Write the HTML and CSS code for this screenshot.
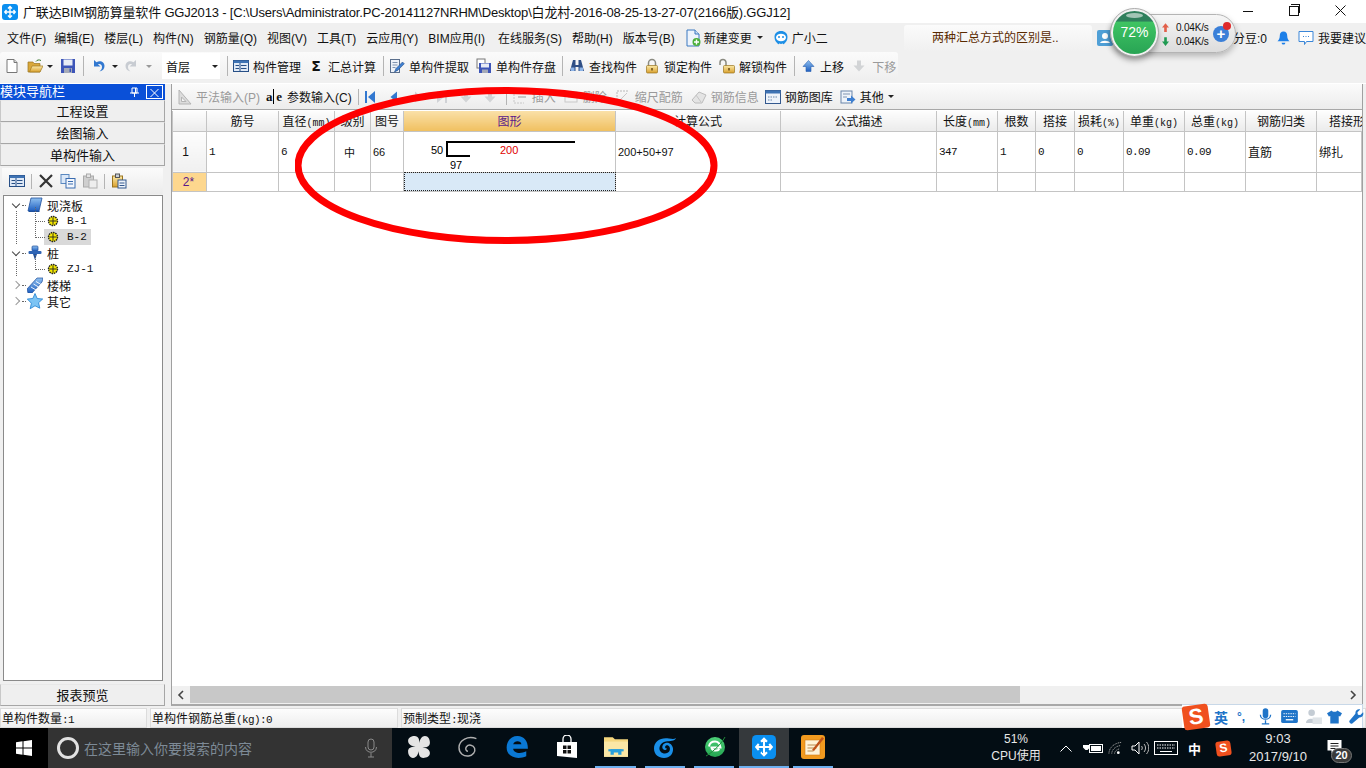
FILE: index.html
```html
<!DOCTYPE html>
<html lang="zh-CN">
<head>
  <meta charset="UTF-8" />
  <title>广联达BIM钢筋算量软件 GGJ2013</title>
  <link rel="stylesheet" href="styles.css">
</head>
<body>
  <!-- icon sprite -->
  <svg class="sprite" xmlns="http://www.w3.org/2000/svg">
    <defs>
      <linearGradient id="gBlue" x1="0" y1="0" x2="0" y2="1"><stop offset="0" stop-color="#8fc0f0"/><stop offset="1" stop-color="#1f5fc0"/></linearGradient>
      <linearGradient id="gGold" x1="0" y1="0" x2="0" y2="1"><stop offset="0" stop-color="#fbe9a8"/><stop offset="1" stop-color="#d9a02c"/></linearGradient>
      <linearGradient id="gGreen" x1="0" y1="0" x2="0" y2="1"><stop offset="0" stop-color="#4cd077"/><stop offset="1" stop-color="#25a552"/></linearGradient>
    </defs>
    <symbol id="i-gld" viewBox="0 0 16 16"><rect width="16" height="16" rx="3" fill="#0a8ff0"/><path d="M8 2.5v11M3 8h10M6 4.5l2-2 2 2M6 11.5l2 2 2-2M4.5 6L2.8 8l1.7 2M11.5 6l1.7 2-1.7 2" fill="none" stroke="#fff" stroke-width="1.4"/></symbol>
    <symbol id="i-doc" viewBox="0 0 16 16"><path d="M3 1.5h7l3 3v10H3z" fill="#fff" stroke="#777"/><path d="M10 1.5v3h3" fill="#ddd" stroke="#777"/></symbol>
    <symbol id="i-open" viewBox="0 0 16 16"><path d="M1 4h5l1 1.5h6V14H1z" fill="#d9a83a" stroke="#9a7420" stroke-width=".7"/><path d="M2.5 14L5 8h11l-3 6z" fill="url(#gGold)" stroke="#a07a20" stroke-width=".7"/><path d="M9 3.5C10 1.8 12 1.5 14 2.5" fill="none" stroke="#3a7a30"/></symbol>
    <symbol id="i-save" viewBox="0 0 16 16"><rect x="1" y="1" width="14" height="14" fill="#3d55b8"/><rect x="3.5" y="1.5" width="9" height="6" fill="#e8ecf5"/><rect x="4" y="10" width="8" height="5" fill="#a5aab8"/><rect x="9.5" y="10.5" width="1.5" height="3.5" fill="#3d55b8"/></symbol>
    <symbol id="i-undo" viewBox="0 0 14 16"><path d="M3 2v6.500h6.500L7 6.200C9 5.400 11 6.600 11 9c0 2-1 3.400-2.500 4.500C11.500 13 13.500 11 13.500 8 13.500 3.800 9 2 5.500 4.300z" fill="#3278d0"/></symbol>
    <symbol id="i-redo" viewBox="0 0 14 16"><path d="M11 2v6.500H4.500L7 6.200C5 5.400 3 6.600 3 9c0 2 1 3.400 2.500 4.500C2.500 13 .5 11 .5 8 .5 3.800 5 2 8.500 4.300z" fill="#c8ccd2"/></symbol>
    <symbol id="i-form" viewBox="0 0 16 16"><rect x=".5" y="2.5" width="15" height="11" fill="#dfe9f6" stroke="#274f86"/><rect x=".5" y="2.5" width="15" height="2.5" fill="#3e73b4"/><path d="M2.5 7.500h3.500M2.500 10.500h3.500M8 7.500h5.500M8 10.500h5.500M7 5v8" stroke="#274f86" fill="none"/></symbol>
    <symbol id="i-pick" viewBox="0 0 16 16"><rect x="1.5" y="1.5" width="9" height="13" fill="#eef2f8" stroke="#5b6f8c"/><path d="M3.500 4.500h5M3.500 7h5M3.500 9.500h3" stroke="#8094b0"/><path d="M5.500 14L7 10.500 13.500 4l1.800 1.800-6.500 6.500z" fill="#3e7fd0" stroke="#274f86" stroke-width=".6"/></symbol>
    <symbol id="i-disk" viewBox="0 0 16 16"><rect x="1" y="1" width="8" height="9" fill="#fff" stroke="#777"/><rect x="3" y="5" width="12" height="10" fill="#3d55b8"/><rect x="5" y="5.5" width="8" height="4" fill="#e8ecf5"/><rect x="6" y="11.5" width="6" height="3.5" fill="#a5aab8"/></symbol>
    <symbol id="i-binoc" viewBox="0 0 16 16"><path d="M4 2h2.500v5h3V2H12l3 11H9.500V9h-3v4H1z" fill="#2f4f86"/><rect x="2" y="9.5" width="3.5" height="3.5" fill="#8db4e8"/><rect x="10.5" y="9.5" width="3.5" height="3.5" fill="#8db4e8"/></symbol>
    <symbol id="i-lock" viewBox="0 0 16 16"><path d="M4.500 8V5a3.500 3.500 0 0 1 7 0v3" fill="none" stroke="#8a8a80" stroke-width="1.5"/><rect x="2.5" y="7.5" width="11" height="7.5" rx="1" fill="url(#gGold)" stroke="#9a7420" stroke-width=".7"/><path d="M8 10v2.500" stroke="#6a4a10" stroke-width="1.5"/></symbol>
    <symbol id="i-unlock" viewBox="0 0 16 16"><path d="M1 7V4.500a3 3 0 0 1 6 0V8" fill="none" stroke="#8a8a80" stroke-width="1.5"/><rect x="4.5" y="7.5" width="11" height="7.5" rx="1" fill="url(#gGold)" stroke="#9a7420" stroke-width=".7"/><path d="M10 10v2.500" stroke="#6a4a10" stroke-width="1.5"/></symbol>
    <symbol id="i-up" viewBox="0 0 13 16"><path d="M6.500 2.500L12 8.500H9v5H4v-5H1z" fill="url(#gBlue)" stroke="#2a62b0" stroke-width=".6"/></symbol>
    <symbol id="i-down" viewBox="0 0 16 16"><path d="M8 13.500L2.500 7.500H6v-5h4v5h3.500z" fill="#d2d4d6"/></symbol>
    <symbol id="i-ruler" viewBox="0 0 16 16"><path d="M3 1v14h12L3 1z" fill="#dcdcdc" stroke="#b4b4b4"/><path d="M5.500 8v4.500H10z" fill="#f4f4f4" stroke="#b4b4b4"/></symbol>
    <symbol id="i-first" viewBox="0 0 16 16"><rect x="3" y="2" width="2" height="12" fill="#3278d0"/><path d="M13 2v12L6 8z" fill="#3278d0"/></symbol>
    <symbol id="i-prev" viewBox="0 0 16 16"><path d="M11 2.500v11L4.500 8z" fill="#3278d0"/></symbol>
    <symbol id="i-next" viewBox="0 0 16 16"><path d="M5 2.500v11L11.500 8z" fill="#d0d2d6"/></symbol>
    <symbol id="i-last" viewBox="0 0 16 16"><rect x="11" y="2" width="2" height="12" fill="#d0d2d6"/><path d="M3 2v12l7-6z" fill="#d0d2d6"/></symbol>
    <symbol id="i-ins" viewBox="0 0 16 16"><path d="M2 2v12h10" fill="none" stroke="#c8c8c8" stroke-dasharray="2 1"/><rect x="6" y="7" width="8" height="2" fill="#c8c8c8"/></symbol>
    <symbol id="i-del" viewBox="0 0 16 16"><rect x="2" y="3" width="12" height="10" fill="#f2f2f2" stroke="#c8c8c8"/><path d="M5 8h6" stroke="#c8c8c8"/></symbol>
    <symbol id="i-scale" viewBox="0 0 16 16"><path d="M2 14V2h12" fill="none" stroke="#b8b8b8" stroke-dasharray="2 1"/><path d="M4 12l8-8" stroke="#c8c8c8"/></symbol>
    <symbol id="i-info" viewBox="0 0 16 16"><path d="M1 11l7-8 7 3-4 8H4z" fill="#e4e4e4" stroke="#bcbcbc"/><path d="M5 6l5 7" stroke="#c4c4c4"/></symbol>
    <symbol id="i-lib" viewBox="0 0 16 16"><rect x=".5" y="1.5" width="15" height="13" fill="#eef3fa" stroke="#33588e"/><rect x=".5" y="1.5" width="15" height="3" fill="#3e73b4"/><path d="M3 8h10M3 11h4" stroke="#6a86aa" stroke-dasharray="1.500 1"/></symbol>
    <symbol id="i-other" viewBox="0 0 16 16"><rect x="1" y="2" width="11" height="12" fill="#eef3fa" stroke="#6a86aa"/><path d="M3 5h7M3 8h4" stroke="#8094b0"/><path d="M7 9h4V6.500L15.500 10.500 11 14.500V12H7z" fill="#3e7fd0"/></symbol>
    <symbol id="i-x" viewBox="0 0 16 16"><path d="M2 2l12 12M14 2L2 14" stroke="#333" stroke-width="2.2"/></symbol>
    <symbol id="i-copy" viewBox="0 0 16 16"><rect x="1" y="1.5" width="8" height="9" fill="#dbe8f8" stroke="#5a88c0"/><rect x="6" y="5.5" width="9" height="9.5" fill="#f2f6fc" stroke="#3a6cb0"/><path d="M8 8.500h5M8 11h5" stroke="#3a6cb0"/></symbol>
    <symbol id="i-paste-off" viewBox="0 0 16 16"><rect x="1.5" y="3" width="10" height="11" fill="#cfcfcf" stroke="#aaa"/><rect x="4.5" y="1" width="4" height="3.5" fill="#e4e4e4" stroke="#aaa"/><rect x="7" y="7" width="8" height="8" fill="#eee" stroke="#b0b0b0"/></symbol>
    <symbol id="i-paste" viewBox="0 0 16 16"><rect x="1.5" y="3" width="10" height="11" fill="url(#gGold)" stroke="#9a7420"/><rect x="4.5" y="1" width="4" height="3.5" fill="#c9d0d8" stroke="#555"/><rect x="7" y="7" width="8" height="8" fill="#eef3fa" stroke="#33588e"/><path d="M8.500 10h5M8.500 12.500h5" stroke="#33588e"/></symbol>
    <symbol id="i-board" viewBox="0 0 16 16"><path d="M4 1h11l-3 13H1z" fill="url(#gBlue)" stroke="#1f4f9a" stroke-width=".8"/><path d="M2 14h10l1 1H1.500z" fill="#1f4f9a"/></symbol>
    <symbol id="i-gear" viewBox="0 0 12 12"><circle cx="6" cy="6" r="4.5" fill="#f5e800" stroke="#222" stroke-dasharray="1.500 .8" stroke-width="1.4"/><path d="M6 2.500v7M2.500 6h7" stroke="#222" stroke-width=".9"/></symbol>
    <symbol id="i-pile" viewBox="0 0 16 16"><rect x="5" y="1" width="6" height="5" rx="1" fill="url(#gBlue)" stroke="#1f4f9a" stroke-width=".7"/><rect x="1.5" y="6" width="13" height="3" rx="1" fill="#2f64b4"/><path d="M6 9h4l-2 6z" fill="#1f4f9a"/></symbol>
    <symbol id="i-stairs" viewBox="0 0 16 16"><path d="M0 12L10 1h6l-1 4L5 16H1z" fill="url(#gBlue)" stroke="#1f4f9a" stroke-width=".7"/><path d="M4 10l5 3M6.500 7l5 3M9 4.500l5 3" stroke="#fff" stroke-width=".9"/></symbol>
    <symbol id="i-star" viewBox="0 0 16 16"><path d="M8 .5l2.200 5 5.500.5-4.100 3.700 1.200 5.500L8 12.800 3.200 15.700l1.200-5.500L.3 6l5.500-.5z" fill="#7cc4f4" stroke="#1e7fd0" stroke-width=".8"/></symbol>
    <symbol id="i-newdoc" viewBox="0 0 16 18"><path d="M2 1h8l4 4v12H2z" fill="#eef4fc" stroke="#3a78c0"/><path d="M10 1v4h4" fill="#cfe0f5" stroke="#3a78c0"/><circle cx="11.5" cy="13" r="4" fill="#4caf3a"/><path d="M11.500 10.500v5M9 13h5" stroke="#fff" stroke-width="1.4"/></symbol>
    <symbol id="i-mascot" viewBox="0 0 16 16"><path d="M8 1c4 0 6.500 2.500 6.500 6 0 3.500-1.500 5-3 6.500-.8.800-1.500 1-2-.2-.4.800-2.600.800-3 0-.5 1.200-1.200 1-2 .2C3 12 1.500 10.500 1.500 7 1.500 3.500 4 1 8 1z" fill="#1d8fe6"/><ellipse cx="8" cy="7.5" rx="5" ry="3.8" fill="#fff"/><circle cx="6" cy="7" r="1" fill="#1d8fe6"/><circle cx="10" cy="7" r="1" fill="#1d8fe6"/></symbol>
    <symbol id="i-user" viewBox="0 0 16 16"><rect width="16" height="16" rx="2" fill="#4f9fd6"/><circle cx="8" cy="6" r="3" fill="#fff"/><path d="M3 13c1-3 9-3 10 0z" fill="#fff"/></symbol>
    <symbol id="i-bell" viewBox="0 0 14 16"><path d="M7 1c2.800 0 4 2.200 4 4.500 0 3 1 4.500 2.500 6H.5C2 10 3 8.500 3 5.500 3 3.200 4.200 1 7 1z" fill="#1d7fe8"/><path d="M5 13h4a2 2 0 0 1-4 0z" fill="#1d7fe8"/></symbol>
    <symbol id="i-chat" viewBox="0 0 16 16"><path d="M1 1.500h14v10H8.500L6.500 14.500v-3H1z" fill="#fff" stroke="#3a86d8"/><path d="M5 6.500h1M7.500 6.500h1M10 6.500h1" stroke="#3a86d8"/></symbol>
    <symbol id="i-win" viewBox="0 0 16 16"><path d="M0 2.200L6.500 1.300v6.200H0zM7.500 1.200L16 0v7.500H7.500zM0 8.500h6.500v6.200L0 13.800zM7.500 8.500H16V16l-8.500-1.200z" fill="#fff"/></symbol>
    <symbol id="i-mic" viewBox="0 0 16 20"><rect x="5" y="1" width="6" height="11" rx="3" fill="none" stroke="#8a8a8a"/><path d="M2.500 9c0 7 11 7 11 0M8 15v4M5 19h6" fill="none" stroke="#8a8a8a"/></symbol>
    <symbol id="i-fan" viewBox="0 0 22 22"><path d="M11 11C5 11 1 9 1 5.500 1 2.500 4 1 7 1c3.500 0 5 3 4 10zM11 11c0-6 2-10 5.500-10C19.500 1 21 4 21 7c0 3.500-3 5-10 4zM11 11c6 0 10 2 10 5.500 0 3-3 4.500-6 4.500-3.500 0-5-3-4-10zM11 11c0 6-2 10-5.500 10C2.500 21 1 18 1 15c0-3.500 3-5 10-4z" fill="#e4e4e4"/></symbol>
    <symbol id="i-swirl" viewBox="0 0 20 20"><path d="M17 3C10 .5 2.500 4 2.500 10.500c0 5 4 7.500 8 7 3.500-.5 6-3.500 5-6.500-1-2.800-5-3.500-6.800-1.200-1.200 1.600-.4 3.700 1.300 3.700" fill="none" stroke="#b0b0b0" stroke-width="1.2"/></symbol>
    <symbol id="i-edge" viewBox="0 0 22 22"><path d="M1.500 11.500C1.500 5 6 1 11.500 1 17.500 1 21 5.500 21 12.500H7.500c.3 3.500 5.500 5.500 12 2.500v4.500c-8 3.500-18 1-18-8zM7.500 8.500h7.500C15 5 8.500 4.500 7.500 8.500z" fill="#0a78d4"/></symbol>
    <symbol id="i-store" viewBox="0 0 22 24"><path d="M1 7h20v16L1 21z" fill="#fff"/><path d="M7 7V4a4 4 0 0 1 8 0v3" fill="none" stroke="#fff" stroke-width="1.3"/><path d="M7 10.500h3.500V14H7zM11.500 10.500H15V14h-3.500zM7 15h3.500v3.500H7zM11.500 15H15v3.500h-3.500z" fill="#111"/></symbol>
    <symbol id="i-folder" viewBox="0 0 22 20"><path d="M0 1h8l2 2h12v16H0z" fill="#f5d67e"/><rect y="5" width="22" height="14" fill="#fbe7a6"/><path d="M6 17v-5h10v5h-3v-2H9v2z" fill="#2aa0dc"/><rect x="4" y="12" width="14" height="2" fill="#2aa0dc"/></symbol>
    <symbol id="i-gbird" viewBox="0 0 24 24"><path d="M23 3c-2 1.500-4 1-7 .5C8 2 1 6 1 13.500 1 19.500 5.500 23 11 23c6 0 9.500-4.500 9-9.500-.5-4-4-6.500-7.500-5.500C9.500 9 8.500 12 10 14c1.200 1.500 3.500 1.300 4-.5-2 .5-2.500-2-1-3 2.500-1 5 2 3.500 5.500-1.500 3-6.500 3.500-9 .5C5 13.500 7 7.500 13 6.500c4-.6 8.500 0 10-3.500z" fill="#1a8fe8"/></symbol>
    <symbol id="i-ie" viewBox="0 0 24 24"><circle cx="12" cy="12" r="10" fill="url(#gGreen)"/><path d="M6 11.500c.5-3 3-5 6-5s5 2 5.500 6H8.500c.5 3.500 5.500 4 8 1.500" fill="none" stroke="#fff" stroke-width="2"/><path d="M3 21C7 19 18 10 22 2" fill="none" stroke="#1e8a3a" stroke-width="1"/></symbol>
    <symbol id="i-notes" viewBox="0 0 24 24"><rect width="24" height="24" rx="3" fill="#f29a1f"/><path d="M4 5h15v15H4z" fill="#fff3d8" stroke="#d07d18" stroke-width=".6"/><path d="M6.500 10h9M6.500 13h9M6.500 16h6" stroke="#b88a50"/><path d="M11 15L21 2l2 1.500L13 16z" fill="#c0521a"/></symbol>
    <symbol id="i-kbd" viewBox="0 0 24 14"><rect x=".5" y=".5" width="23" height="13" fill="none" stroke="#fff"/><path d="M3 4h18M3 7h18" stroke="#fff" stroke-dasharray="1.500 1"/><path d="M6 10.500h12" stroke="#fff"/></symbol>
    <symbol id="i-wifi" viewBox="0 0 16 14"><path d="M1 13C1 7 6 2 14 1M4 13c0-4 4-8 9-8.500M7 13c0-2.500 2.500-4.500 5-5" fill="none" stroke="#9a9a9a" stroke-dasharray="1.300 .7"/><circle cx="11" cy="12" r="1.5" fill="#fff"/></symbol>
    <symbol id="i-batt" viewBox="0 0 20 14"><path d="M2 4V1M5 4V1M0 4h7v2.500L4.500 9H2.500L0 6.500z" fill="#fff"/><rect x="6.5" y="3.5" width="13" height="8" fill="none" stroke="#fff"/><rect x="8" y="5" width="10" height="5" fill="#fff"/></symbol>
    <symbol id="i-vol" viewBox="0 0 18 14"><path d="M1 5h3l4-4v12L4 9H1z" fill="none" stroke="#fff"/><path d="M10.500 5c1 1.200 1 2.800 0 4M13 3c2 2.500 2 5.500 0 8M15.500 1c3 3.500 3 8.500 0 12" fill="none" stroke="#bbb"/></symbol>
    <symbol id="i-action" viewBox="0 0 16 16"><path d="M1 1h14v10.500H8l-3 3v-3H1z" fill="#fff"/><path d="M4 4.500h8M4 7h8M4 9.500h5" stroke="#222"/></symbol>
    <symbol id="i-sg-mic" viewBox="0 0 14 18"><rect x="4" y="0" width="6" height="11" rx="3" fill="#1f74c8"/><path d="M1.500 7c0 6.500 11 6.500 11 0M7 13v4M3 17h8" fill="none" stroke="#1f74c8" stroke-width="1.4"/></symbol>
    <symbol id="i-sg-kbd" viewBox="0 0 18 14"><rect width="18" height="14" rx="2" fill="#1f74c8"/><path d="M2.500 4h13M2.500 7h13" stroke="#fff" stroke-dasharray="1.500 1"/><path d="M5 10.500h8" stroke="#fff" stroke-width="1.4"/></symbol>
    <symbol id="i-sg-user" viewBox="0 0 18 16"><circle cx="7" cy="4" r="3.5" fill="#c4ccd4"/><path d="M1 15c0-6 11-6 12 0z" fill="#c4ccd4"/><rect x="8" y="9" width="10" height="7" fill="#dfe4e8"/></symbol>
    <symbol id="i-sg-shirt" viewBox="0 0 16 14"><path d="M5 0L0 3l2 3.500L3.500 6v8h9V6L14 6.500 16 3l-5-3c-.5 2-5.500 2-6 0z" fill="#1f74c8"/></symbol>
    <symbol id="i-sg-wrench" viewBox="0 0 16 16"><path d="M15 3.500l-3 3-2.500-.5L9 3.500l3-3C9.500-.5 6.500 1.500 6.800 5L.5 12.500c-1 1.500 1.500 4 3 3l7.500-6.500c3.500.5 5-3 4-5.500z" fill="#1f74c8"/></symbol>
    <symbol id="i-arrow-up" viewBox="0 0 8 10"><path d="M4 0l4 5H5.500v5h-3V5H0z" fill="#e2604a"/></symbol>
    <symbol id="i-arrow-dn" viewBox="0 0 8 10"><path d="M4 10l4-5H5.500V0h-3v5H0z" fill="#1f9a52"/></symbol>
  </svg>

  <header class="titlebar">
    <svg class="ic"><use href="#i-gld"/></svg>
    <span class="title-text">广联达BIM钢筋算量软件 GGJ2013 - [C:\Users\Administrator.PC-20141127NRHM\Desktop\白龙村-2016-08-25-13-27-07(2166版).GGJ12]</span>
    <div class="win-btns">
      <span class="win-min"></span>
      <span class="win-max"></span>
      <span class="win-close">
        <svg viewBox="0 0 11 11"><path d="M.5.500l10 10M10.500.500l-10 10" stroke="#111" fill="none"/></svg>
      </span>
    </div>
  </header>

  <nav class="menubar">
    <span class="tight">文件(F)</span><span>编辑(E)</span><span>楼层(L)</span><span>构件(N)</span><span>钢筋量(Q)</span><span>视图(V)</span><span>工具(T)</span><span>云应用(Y)</span><span class="loose">BIM应用(I)</span><span>在线服务(S)</span><span>帮助(H)</span><span>版本号(B)</span>
    <span class="menu-ic"><svg class="ic ic-tall"><use href="#i-newdoc"/></svg>新建变更<i class="caret"></i></span>
    <span class="menu-ic"><svg class="ic"><use href="#i-mascot"/></svg>广小二</span>
    <div class="menu-right">
      <div class="tip-tab">两种汇总方式的区别是..</div>
      <svg class="ic"><use href="#i-user"/></svg>
      <span class="bean">分豆:0</span>
      <svg class="ic ic-bell"><use href="#i-bell"/></svg>
      <span class="menu-ic suggest"><svg class="ic"><use href="#i-chat"/></svg>我要建议</span>
    </div>
  </nav>

  <div class="toolbar-wrap">
    <div class="toolbar">
      <svg class="ic"><use href="#i-doc"/></svg>
      <svg class="ic"><use href="#i-open"/></svg><i class="caret tight"></i>
      <svg class="ic"><use href="#i-save"/></svg>
      <i class="sep"></i>
      <svg class="ic ic-14"><use href="#i-undo"/></svg><i class="caret"></i>
      <svg class="ic ic-14"><use href="#i-redo"/></svg><i class="caret off"></i>
      <div class="combo">首层<i class="caret"></i></div>
      <i class="sep sep-after-combo"></i>
      <span class="tb-item"><svg class="ic"><use href="#i-form"/></svg>构件管理</span>
      <span class="tb-item"><b class="sigma">Σ</b>汇总计算</span>
      <i class="sep sep-pull"></i>
      <span class="tb-item"><svg class="ic"><use href="#i-pick"/></svg>单构件提取</span>
      <span class="tb-item"><svg class="ic"><use href="#i-disk"/></svg>单构件存盘</span>
      <i class="sep sep-snug"></i>
      <span class="tb-item"><svg class="ic"><use href="#i-binoc"/></svg>查找构件</span>
      <span class="tb-item"><svg class="ic"><use href="#i-lock"/></svg>锁定构件</span>
      <span class="tb-item"><svg class="ic"><use href="#i-unlock"/></svg>解锁构件</span>
      <i class="sep"></i>
      <span class="tb-item wide"><svg class="ic ic-13"><use href="#i-up"/></svg>上移</span>
      <span class="tb-item wide off"><svg class="ic"><use href="#i-down"/></svg>下移</span>
    </div>
  </div>

  <main class="workspace">
    <aside class="nav-panel">
      <div class="nav-title">
        <span>模块导航栏</span>
        <span class="pin">
          <svg viewBox="0 0 9 10"><path d="M2 1h5v5H2zM0 6h9M4.500 6v4M5.500 1v5" stroke="#fff" fill="none"/></svg>
        </span>
        <span class="nav-close"><svg viewBox="0 0 9 9"><path d="M.5.500l8 8M8.500.500l-8 8" stroke="#fff" fill="none"/></svg></span>
      </div>
      <div class="nav-btn">工程设置</div>
      <div class="nav-btn">绘图输入</div>
      <div class="nav-btn">单构件输入</div>
      <div class="tree-tools">
        <svg class="ic"><use href="#i-form"/></svg>
        <i class="sep"></i>
        <svg class="ic"><use href="#i-x"/></svg>
        <svg class="ic"><use href="#i-copy"/></svg>
        <svg class="ic"><use href="#i-paste-off"/></svg>
        <i class="sep"></i>
        <svg class="ic"><use href="#i-paste"/></svg>
      </div>
      <div class="tree">
        <div class="node open"><i class="chev down"></i><i class="dots"></i><svg class="ic"><use href="#i-board"/></svg><span>现浇板</span></div>
        <div class="leaf"><span class="leaf-in"><svg class="ic-gear"><use href="#i-gear"/></svg>B-1</span></div>
        <div class="leaf last"><span class="leaf-in picked"><svg class="ic-gear"><use href="#i-gear"/></svg>B-2</span></div>
        <div class="node open"><i class="chev down"></i><i class="dots"></i><svg class="ic"><use href="#i-pile"/></svg><span>桩</span></div>
        <div class="leaf only"><span class="leaf-in"><svg class="ic-gear"><use href="#i-gear"/></svg>ZJ-1</span></div>
        <div class="node"><i class="chev"></i><i class="dots"></i><svg class="ic"><use href="#i-stairs"/></svg><span>楼梯</span></div>
        <div class="node"><i class="chev"></i><i class="dots"></i><svg class="ic"><use href="#i-star"/></svg><span>其它</span></div>
      </div>
      <div class="nav-btn report">报表预览</div>
    </aside>

    <section class="editor">
      <div class="edit-tools">
        <span class="tb-item off pull-2"><svg class="ic"><use href="#i-ruler"/></svg>平法输入(P)</span>
        <span class="tb-item"><span class="ale">a<u></u>e</span>参数输入(C)</span>
        <i class="sep sep-nav"></i>
        <svg class="ic"><use href="#i-first"/></svg>
        <svg class="ic"><use href="#i-prev"/></svg>
        <svg class="ic"><use href="#i-next"/></svg>
        <svg class="ic"><use href="#i-last"/></svg>
        <svg class="ic"><use href="#i-down"/></svg>
        <svg class="ic"><use href="#i-down"/></svg>
        <i class="sep sep-ins"></i>
        <span class="tb-item off"><svg class="ic"><use href="#i-ins"/></svg>插入</span>
        <span class="tb-item off shift-1"><svg class="ic"><use href="#i-del"/></svg>删除</span>
        <span class="tb-item off"><svg class="ic"><use href="#i-scale"/></svg>缩尺配筋</span>
        <span class="tb-item off"><svg class="ic"><use href="#i-info"/></svg>钢筋信息</span>
        <span class="tb-item shift-2"><svg class="ic"><use href="#i-lib"/></svg>钢筋图库</span>
        <span class="tb-item shift-1"><svg class="ic"><use href="#i-other"/></svg>其他<i class="caret"></i></span>
      </div>

      <div class="grid-area">
        <table class="rebar-grid">
          <colgroup>
            <col class="c-head"><col class="c-no"><col class="c-dia"><col class="c-grade"><col class="c-fig"><col class="c-shape"><col class="c-calc"><col class="c-desc"><col class="c-len"><col class="c-qty"><col class="c-lap"><col class="c-loss"><col class="c-unit"><col class="c-total"><col class="c-type"><col class="c-form">
          </colgroup>
          <thead>
            <tr>
              <th></th><th>筋号</th><th>直径<span class="mono">(mm)</span></th><th>级别</th><th>图号</th><th class="active">图形</th><th>计算公式</th><th>公式描述</th><th>长度<span class="mono">(mm)</span></th><th>根数</th><th>搭接</th><th>损耗<span class="mono">(%)</span></th><th>单重<span class="mono">(kg)</span></th><th>总重<span class="mono">(kg)</span></th><th>钢筋归类</th><th class="clip">搭接形</th>
            </tr>
          </thead>
          <tbody>
            <tr class="row-tall">
              <td class="rowhead">1</td>
              <td class="mono">1</td>
              <td class="mono freeze">6</td>
              <td class="center">中</td>
              <td class="small">66</td>
              <td class="shape">
                <svg class="shape-svg" viewBox="0 0 211 40">
                  <path d="M171 10H43V24H66" fill="none" stroke="#000" stroke-width="2"/>
                  <text x="27" y="22">50</text>
                  <text x="96" y="22" fill="#e00000">200</text>
                  <text x="46" y="37">97</text>
                </svg>
              </td>
              <td class="small">200+50+97</td>
              <td></td>
              <td class="mono">347</td>
              <td class="mono">1</td>
              <td class="mono">0</td>
              <td class="mono">0</td>
              <td class="mono">0.09</td>
              <td class="mono">0.09</td>
              <td>直筋</td>
              <td>绑扎</td>
            </tr>
            <tr class="row-new">
              <td class="rowhead new">2*</td>
              <td></td>
              <td class="freeze"></td>
              <td></td>
              <td></td>
              <td class="selected"></td>
              <td></td><td></td><td></td><td></td><td></td><td></td><td></td><td></td><td></td><td></td>
            </tr>
          </tbody>
        </table>
      </div>

      <div class="hscroll">
        <svg class="arrow" viewBox="0 0 8 10"><path d="M6 1L2 5l4 4" fill="none" stroke="#444" stroke-width="1.6"/></svg>
        <div class="track"><div class="thumb"></div></div>
        <svg class="arrow" viewBox="0 0 8 10"><path d="M2 1l4 4-4 4" fill="none" stroke="#444" stroke-width="1.6"/></svg>
      </div>
    </section>
  </main>

  <footer class="statusbar">
    <div class="st-cell st-a">单构件数量<span class="mono">:1</span></div>
    <div class="st-cell st-b">单构件钢筋总重<span class="mono">(kg):0</span></div>
    <div class="st-cell st-c">预制类型<span class="mono">:</span>现浇</div>
  </footer>

  <div class="taskbar">
    <div class="start"><svg class="ic"><use href="#i-win"/></svg></div>
    <div class="search">
      <i class="cortana"></i>
      <span class="search-text">在这里输入你要搜索的内容</span>
      <svg class="search-mic"><use href="#i-mic"/></svg>
    </div>
    <div class="task-apps">
      <div class="app"><svg><use href="#i-fan"/></svg></div>
      <div class="app"><svg><use href="#i-swirl"/></svg></div>
      <div class="app"><svg><use href="#i-edge"/></svg></div>
      <div class="app"><svg><use href="#i-store"/></svg></div>
      <div class="app running"><svg><use href="#i-folder"/></svg></div>
      <div class="app running"><svg><use href="#i-gbird"/></svg></div>
      <div class="app running"><svg><use href="#i-ie"/></svg></div>
      <div class="app running current"><svg><use href="#i-gld"/></svg></div>
      <div class="app running"><svg><use href="#i-notes"/></svg></div>
    </div>
    <div class="tray">
      <div class="cpu">51%<br>CPU使用</div>
      <svg class="tray-chev" viewBox="0 0 12 7"><path d="M.5 6.500L6 1l5.500 5.500" fill="none" stroke="#fff"/></svg>
      <svg class="tray-batt"><use href="#i-batt"/></svg>
      <svg class="tray-wifi"><use href="#i-wifi"/></svg>
      <svg class="tray-vol"><use href="#i-vol"/></svg>
      <svg class="tray-kbd"><use href="#i-kbd"/></svg>
      <span class="tray-ime">中</span>
      <span class="sg-logo small-logo">S</span>
      <div class="clock">9:03<br>2017/9/10</div>
      <div class="action">
        <svg><use href="#i-action"/></svg>
        <span class="action-badge">20</span>
      </div>
    </div>
  </div>

  <!-- things floating over the window -->
  <svg class="red-ring" viewBox="0 0 430 165">
    <ellipse cx="211" cy="80.5" rx="208" ry="75" fill="none" stroke="#fe0000" stroke-width="7"/>
  </svg>

  <div class="net-widget">
    <div class="net-ball">72%</div>
    <div class="net-speed">
      <div><svg><use href="#i-arrow-up"/></svg>0.04K/s</div>
      <div><svg><use href="#i-arrow-dn"/></svg>0.04K/s</div>
    </div>
    <div class="net-plus">+<i></i></div>
  </div>

  <div class="sogou-bar">
    <span class="sg-logo">S</span>
    <b class="sg-lang">英</b>
    <span class="sg-punct">°,</span>
    <svg class="sg-mic"><use href="#i-sg-mic"/></svg>
    <svg class="sg-kbd"><use href="#i-sg-kbd"/></svg>
    <svg class="sg-user"><use href="#i-sg-user"/></svg>
    <svg class="sg-shirt"><use href="#i-sg-shirt"/></svg>
    <svg class="sg-wrench"><use href="#i-sg-wrench"/></svg>
  </div>
</body>
</html>
```

FILE: styles.css
```css
* {
  box-sizing: border-box;
}

html, body {
  margin: 0;
  height: 100%;
}

body {
  position: relative;
  width: 1366px;
  height: 768px;
  overflow: hidden;
  display: flex;
  flex-direction: column;
  background: #f0f0f0;
  color: #111;
  font-family: "Liberation Sans", "Noto Sans CJK SC", sans-serif;
  font-size: 12px;
}

i { font-style: normal; }

.sprite {
  position: absolute;
  width: 0;
  height: 0;
}

.ic {
  flex: none;
  width: 16px;
  height: 16px;
}
.ic-14 { width: 14px; }
.ic-13 { width: 13px; }
.ic-tall { height: 18px; }

.mono {
  font-family: "Liberation Mono", "Noto Sans CJK SC", monospace;
  font-size: 11px;
  letter-spacing: -0.6px;
}

.caret {
  display: inline-block;
  flex: none;
  width: 0;
  height: 0;
  border: 3px solid transparent;
  border-top: 3px solid #222;
  border-bottom: 0;
}
.caret.off { border-top-color: #999; }
.caret.tight { margin-left: -3px; }

.sep {
  flex: none;
  width: 1px;
  height: 20px;
  background: #b4b4b4;
}

/* === TITLE BAR === */
.titlebar {
  flex: none;
  height: 23px;
  display: flex;
  align-items: center;
  gap: 5px;
  padding-left: 2px;
  background: #fff;
}
.title-text {
  font-size: 13px;
  letter-spacing: -0.18px;
  white-space: nowrap;
}
.win-btns {
  margin-left: auto;
  display: flex;
  align-items: center;
  height: 100%;
}
.win-btns span {
  display: block;
  position: relative;
}
.win-min {
  width: 10px;
  height: 1px;
  background: #111;
  margin-right: 36px;
}
.win-max {
  width: 10px;
  height: 10px;
  border: 1px solid #111;
  margin-right: 36px;
  margin-top: -2px;
}
.win-max::before {
  content: "";
  position: absolute;
  top: -3px;
  left: 1px;
  width: 8px;
  height: 8px;
  border: 1px solid #111;
  border-bottom: 0;
  border-left: 0;
}
.win-close {
  width: 11px;
  height: 11px;
  margin-right: 20px;
  margin-top: -2px;
}
.win-close svg { display: block; }

/* === MENU === */
.menubar {
  flex: none;
  height: 29px;
  display: flex;
  align-items: center;
  gap: 10px;
  padding-left: 7px;
  background: #f0f0f0;
  white-space: nowrap;
}
.menubar .tight { margin-right: -2px; }
.menubar .loose { margin-right: 3px; }
.menu-ic {
  display: flex;
  align-items: center;
  gap: 3px;
}
.menu-ic .caret { margin-left: 2px; }
.menu-right {
  position: relative;
  margin-left: auto;
  display: flex;
  align-items: center;
  height: 100%;
  width: 462px;
}
.tip-tab {
  width: 188px;
  height: 26px;
  margin-right: 5px;
  padding-left: 28px;
  line-height: 26px;
  color: #5a2a00;
  background: linear-gradient(to bottom, #fbfbfb, #f0f0f0);
  border-radius: 3px;
}
.bean {
  margin-left: 108px;
  width: 46px;
  text-align: right;
}
.ic-bell {
  width: 13px;
  margin-left: 10px;
}
.suggest {
  margin-left: 8px;
  gap: 4px;
}

/* === MAIN TOOLBAR === */
.toolbar-wrap {
  flex: none;
  height: 32px;
  padding-bottom: 2px;
  border-bottom: 1px solid #fff;
}
.toolbar {
  width: 898px;
  height: 28px;
  display: flex;
  align-items: center;
  gap: 7px;
  padding-left: 4px;
  border-radius: 3px;
  background: linear-gradient(to bottom, #fbfbfb, #efefef);
  white-space: nowrap;
}
.tb-item {
  display: flex;
  align-items: center;
  gap: 4px;
}
.tb-item.wide { gap: 5px; }
.tb-item.off { color: #9a9a9a; }
.sep-after-combo { margin-right: -2px; }
.sep-pull { margin-right: -2px; }
.sep-snug { margin: 0 -1px; }
.sigma {
  width: 16px;
  text-align: center;
  font-size: 14px;
  font-family: "DejaVu Sans", sans-serif;
}
.combo {
  width: 58px;
  height: 26px;
  margin-left: 3px;
  display: flex;
  align-items: center;
  justify-content: space-between;
  padding: 0 2px 0 4px;
  background: #fff;
}

/* === WORKSPACE === */
.workspace {
  flex: 1;
  min-height: 0;
  display: flex;
  gap: 6px;
  padding-bottom: 2px;
}

.nav-panel {
  width: 165px;
  display: flex;
  flex-direction: column;
  background: #f0f0f0;
}
.nav-title {
  height: 16px;
  display: flex;
  align-items: center;
  padding-right: 2px;
  background: #0a50d8;
  color: #fff;
  font-size: 13px;
  line-height: 16px;
}
.nav-title span:first-child { flex: 1; }
.pin {
  width: 9px;
  height: 10px;
  margin-right: 7px;
}
.pin svg, .nav-close svg {
  display: block;
  width: 9px;
  height: 10px;
}
.nav-close {
  width: 17px;
  height: 14px;
  padding: 2px 3px;
  border: 1px solid #fff;
}
.nav-close svg { margin: auto; }
.nav-btn {
  flex: none;
  height: 22px;
  line-height: 22px;
  text-align: center;
  font-size: 13px;
  background: #efefef;
  border: 1px solid #a6a6a6;
  border-left-color: #c8c8c8;
  border-top-color: #e8e8e8;
}
.tree-tools {
  flex: none;
  height: 26px;
  margin: 2px 2px 0;
  padding-left: 7px;
  display: flex;
  align-items: center;
  gap: 6px;
  background: linear-gradient(to bottom, #fbfbfb, #ececec);
}
.tree-tools .sep { height: 15px; }
.tree {
  flex: 1;
  min-height: 0;
  margin: 1px 2px 0 3px;
  padding-top: 1px;
  background: #fff;
  border: 1px solid #8a8a8a;
}
.node, .leaf {
  position: relative;
  height: 16px;
  display: flex;
  align-items: center;
  white-space: nowrap;
}
.node { padding-left: 8px; }
.node span { margin-left: 4px; }
.chev {
  flex: none;
  width: 6px;
  height: 6px;
  border-right: 1.5px solid #9a9a9a;
  border-top: 1.5px solid #9a9a9a;
  transform: rotate(45deg);
  margin: 0 3px 0 1px;
}
.chev.down {
  border-color: #444;
  transform: rotate(135deg);
  margin-top: -3px;
}
.dots {
  flex: none;
  width: 4px;
  margin-right: 1px;
  border-top: 1px dotted #666;
}
.node.open::after {
  content: "";
  position: absolute;
  left: 12px;
  top: 14px;
  height: 33px;
  border-left: 1px dotted #666;
}
.node.open:nth-child(4)::after { height: 17px; }
.leaf {
  padding-left: 40px;
  font-family: "Liberation Mono", monospace;
  font-size: 11px;
}
.leaf::before {
  content: "";
  position: absolute;
  left: 31px;
  top: -6px;
  width: 9px;
  height: 14px;
  border-left: 1px dotted #666;
  border-bottom: 1px dotted #666;
}
.leaf.last::before { top: -8px; height: 16px; }
.leaf-in {
  display: flex;
  align-items: center;
  height: 16px;
  padding: 0 4px 0 3px;
}
.leaf-in.picked { background: #d9d9d9; }
.ic-gear {
  flex: none;
  width: 12px;
  height: 12px;
  margin-right: 8px;
}
.nav-btn.report { margin-top: 3px; }

/* === EDITOR === */
.editor {
  flex: 1;
  min-width: 0;
  margin-right: 3px;
  display: flex;
  flex-direction: column;
  border-left: 1px solid #a0a0a0;
  border-right: 1px solid #a0a0a0;
  border-bottom: 2px solid #a8a8a8;
}
.edit-tools {
  flex: none;
  height: 26px;
  display: flex;
  align-items: center;
  gap: 8px;
  padding-left: 4px;
  background: linear-gradient(to bottom, #fbfbfb, #ececec);
  border-bottom: 1px solid #a8a8a8;
  white-space: nowrap;
}
.edit-tools .sep { height: 16px; }
.edit-tools .pull-2 { margin-right: -2px; }
.edit-tools .shift-1 { margin-left: -1px; }
.edit-tools .shift-2 { margin-left: -2px; }
.sep-nav {
  margin-left: -2px;
  margin-right: -5px;
}
.sep-ins { margin-right: -3px; }
.ale {
  position: relative;
  width: 16px;
  display: flex;
  justify-content: space-between;
  font-family: "Liberation Serif", serif;
  font-weight: bold;
  font-size: 13px;
  margin-right: 1px;
}
.ale u {
  position: absolute;
  left: 7px;
  top: 0;
  width: 1px;
  height: 15px;
  background: #000;
}
.grid-area {
  flex: 1;
  min-height: 0;
  padding-top: 1px;
  background: #fff;
}
.rebar-grid {
  border-collapse: collapse;
  table-layout: fixed;
  width: 1189px;
}
.c-head { width: 34px; }
.c-no { width: 72px; }
.c-dia { width: 56px; }
.c-grade { width: 36px; }
.c-fig { width: 33px; }
.c-shape { width: 212px; }
.c-calc { width: 165px; }
.c-desc { width: 156px; }
.c-len { width: 61px; }
.c-qty { width: 38px; }
.c-lap { width: 39px; }
.c-loss { width: 49px; }
.c-unit { width: 61px; }
.c-total { width: 61px; }
.c-type { width: 71px; }
.c-form { width: 45px; }
.rebar-grid th {
  height: 20px;
  padding: 0;
  font-weight: normal;
  white-space: nowrap;
  overflow: hidden;
  background: linear-gradient(to bottom, #fdfdfd, #ebebeb);
  border: 1px solid #c4c4c4;
  border-top: 0;
}
.rebar-grid th .mono {
  font-size: 10px;
  letter-spacing: 0;
}
.rebar-grid th.active {
  color: #5a1a8a;
  background: linear-gradient(to bottom, #fae0a8, #f0c060);
}
.rebar-grid th.clip {
  text-align: left;
  padding-left: 12px;
  border-right: 0;
}
.rebar-grid td {
  padding: 0 0 0 2px;
  border: 1px solid #c4c4c4;
  overflow: hidden;
  white-space: nowrap;
}
.row-tall { height: 41px; }
.row-new { height: 19px; }
.rebar-grid td.rowhead {
  padding: 0 8px 0 0;
  text-align: center;
  background: linear-gradient(to bottom, #fdfdfd, #f0f0f0);
}
.rebar-grid td.rowhead.new {
  padding-right: 2px;
  color: #5a1a8a;
  background: #fdd78e;
}
.rebar-grid td.freeze { border-left: 1px solid #000; }
.rebar-grid td.center {
  padding: 0 6px 0 0;
  text-align: center;
  font-size: 11px;
}
.rebar-grid td.small { font-size: 11px; }
.rebar-grid td.shape { padding: 0; }
.shape-svg {
  display: block;
  width: 211px;
  height: 40px;
  font-family: "Liberation Sans", sans-serif;
  font-size: 11px;
}
.rebar-grid td.selected {
  background: #d9e9f7;
  outline: 1px dotted #222;
  outline-offset: -1px;
}
.hscroll {
  flex: none;
  height: 17px;
  display: flex;
  align-items: center;
  background: #f0f0f0;
  margin-bottom: 1px;
}
.arrow {
  flex: none;
  width: 18px;
  height: 10px;
}
.track {
  flex: 1;
  height: 100%;
}
.thumb {
  width: 830px;
  height: 100%;
  background: #c8c8c8;
}

/* === STATUS === */
.statusbar {
  flex: none;
  height: 20px;
  display: flex;
  gap: 3px;
}
.st-cell {
  height: 20px;
  padding-left: 1px;
  line-height: 20px;
  white-space: nowrap;
  background: linear-gradient(to bottom, #fdfdfd, #eeeeee);
  border: 1px solid #dcdcdc;
}
.st-a { width: 147px; }
.st-b { width: 248px; }
.st-c { flex: 1; }

/* === TASKBAR === */
.taskbar {
  flex: none;
  height: 40px;
  display: flex;
  background: #030d14;
  color: #fff;
}
.start {
  flex: none;
  width: 48px;
  display: flex;
  align-items: center;
  justify-content: center;
  background: #000;
}
.start .ic { margin-top: -1px; }
.search {
  flex: none;
  width: 344px;
  display: flex;
  align-items: center;
  padding: 0 13px 0 9px;
  background: #333333;
  color: #7d8a96;
  font-size: 14px;
}
.cortana {
  flex: none;
  width: 22px;
  height: 22px;
  border: 3px solid #e2e2e2;
  border-radius: 50%;
  margin-right: 5px;
}
.search-mic {
  margin-left: auto;
  width: 16px;
  height: 20px;
}
.task-apps {
  flex: none;
  display: flex;
  margin-left: 2px;
  width: 444px;
}
.app {
  position: relative;
  width: 49.75px;
  display: flex;
  align-items: center;
  justify-content: center;
}
.app svg {
  width: 24px;
  height: 24px;
  margin-top: -2px;
}
.app.running::after {
  content: "";
  position: absolute;
  left: 4px;
  right: 5px;
  bottom: 0;
  height: 2px;
  background: #6eb0f0;
}
.app.current { background: #35393c; }
.app.current::after {
  left: 0;
  right: 0;
}
.tray {
  flex: 1;
  min-width: 0;
  display: flex;
  align-items: center;
  padding-left: 149px;
}
.tray > * { flex: none; }
.cpu {
  width: 58px;
  text-align: center;
  line-height: 17px;
  color: #e8e8e8;
}
.tray-chev {
  width: 12px;
  height: 7px;
  margin-left: 15px;
}
.tray-batt {
  width: 20px;
  height: 14px;
  margin-left: 11px;
}
.tray-wifi {
  width: 15px;
  height: 14px;
  margin-left: 5px;
}
.tray-vol {
  width: 18px;
  height: 14px;
  margin-left: 8px;
}
.tray-kbd {
  width: 24px;
  height: 14px;
  margin-left: 5px;
}
.tray-ime {
  margin-left: 10px;
  font-size: 13px;
  font-weight: bold;
}
.tray .sg-logo.small-logo {
  width: 15px;
  height: 15px;
  margin-left: 15px;
  font-size: 12px;
  line-height: 15px;
}
.clock {
  width: 74px;
  margin-left: 10px;
  text-align: center;
  line-height: 18px;
  color: #e8e8e8;
  font-size: 13px;
}
.action {
  position: relative;
  width: 40px;
  height: 40px;
  margin-left: 8px;
}
.action svg {
  position: absolute;
  left: 3px;
  top: 11px;
  width: 17px;
  height: 16px;
}
.action-badge {
  position: absolute;
  left: 8px;
  top: 20px;
  width: 21px;
  height: 15px;
  border-radius: 8px;
  background: #3a3a3a;
  border: 1px solid #777;
  font-size: 11px;
  font-weight: bold;
  line-height: 13px;
  text-align: center;
}

/* === OVERLAYS === */
.red-ring {
  position: absolute;
  left: 295px;
  top: 85px;
  width: 430px;
  height: 165px;
  pointer-events: none;
}

.net-widget {
  position: absolute;
  left: 1110px;
  top: 14px;
  width: 126px;
  height: 39px;
  border-radius: 20px;
  background: linear-gradient(to bottom, #f6f6f6, #dcdcdc);
  border: 1px solid #b4b4b4;
  box-shadow: 0 3px 6px rgba(0, 0, 0, 0.25);
}
.net-ball {
  position: absolute;
  left: 0;
  top: -6px;
  width: 47px;
  height: 47px;
  border-radius: 50%;
  background: linear-gradient(to bottom, #2f7f5c 0, #2f7f5c 24%, #3fc463 25%, #28a454 100%);
  border: 2px solid #f2f2f2;
  outline: 1px solid #aaa;
  box-shadow: 0 4px 6px rgba(0, 0, 0, 0.35);
  color: #fff;
  font-size: 14px;
  line-height: 43px;
  text-align: center;
}
.net-ball::before {
  content: "";
  position: absolute;
  left: 13px;
  top: 2px;
  width: 17px;
  height: 5px;
  border-radius: 50%;
  background: rgba(255, 255, 255, 0.55);
}
.net-speed {
  position: absolute;
  left: 51px;
  top: 6px;
  font-size: 10px;
  letter-spacing: -0.2px;
  line-height: 14px;
  white-space: nowrap;
}
.net-speed svg {
  width: 7px;
  height: 9px;
  margin-right: 7px;
  vertical-align: -1px;
}
.net-plus {
  position: absolute;
  left: 102px;
  top: 11px;
  width: 16px;
  height: 16px;
  border-radius: 50%;
  background: #3a7fd8;
  color: #fff;
  font-size: 15px;
  font-weight: bold;
  line-height: 15px;
  text-align: center;
}
.net-plus i {
  position: absolute;
  left: 10px;
  top: -4px;
  width: 8px;
  height: 8px;
  border-radius: 50%;
  background: #e02a2a;
}

.sogou-bar {
  position: absolute;
  left: 1182px;
  top: 704px;
  width: 181px;
  height: 24px;
  display: flex;
  align-items: center;
  gap: 9px;
  padding-left: 1px;
  background: #fff;
  border: 1px solid #c8d8e8;
  border-width: 1px 1px 0 0;
  color: #1f74c8;
}
.sg-logo {
  flex: none;
  display: block;
  width: 26px;
  height: 24px;
  border-radius: 3px;
  background: #f0501e;
  color: #fff;
  font-weight: bold;
  font-size: 22px;
  line-height: 24px;
  text-align: center;
  transform: rotate(-8deg);
}
.sg-lang {
  flex: none;
  font-size: 14px;
  margin-left: -4px;
}
.sg-punct {
  flex: none;
  width: 9px;
  font-weight: bold;
}
.sg-mic {
  flex: none;
  width: 13px;
  height: 17px;
  margin-left: 4px;
}
.sg-kbd {
  flex: none;
  width: 17px;
  height: 13px;
}
.sg-user {
  flex: none;
  width: 17px;
  height: 15px;
  margin-left: -2px;
}
.sg-shirt {
  flex: none;
  width: 15px;
  height: 14px;
  margin-left: -4px;
}
.sg-wrench {
  flex: none;
  width: 15px;
  height: 15px;
  margin-left: -2px;
}
```
